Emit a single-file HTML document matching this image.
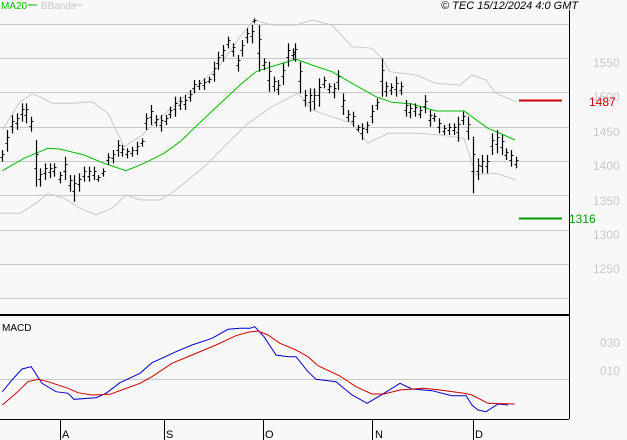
<!DOCTYPE html>
<html><head><meta charset="utf-8"><style>
html,body{margin:0;padding:0;background:#f8f8f8;width:627px;height:440px;overflow:hidden}
svg{display:block}
text{font-family:"Liberation Sans",sans-serif}
</style></head><body>
<svg id="s" width="627" height="440" viewBox="0 0 627 440" xmlns="http://www.w3.org/2000/svg">
<rect width="627" height="440" fill="#f8f8f8"/>
<g stroke="#c8c8c8" stroke-width="1">
<line x1="0" y1="24.5" x2="569" y2="24.5"/>
<line x1="0" y1="58.5" x2="569" y2="58.5"/>
<line x1="0" y1="92.5" x2="569" y2="92.5"/>
<line x1="0" y1="127.5" x2="569" y2="127.5"/>
<line x1="0" y1="161.5" x2="569" y2="161.5"/>
<line x1="0" y1="195.5" x2="569" y2="195.5"/>
<line x1="0" y1="230.5" x2="569" y2="230.5"/>
<line x1="0" y1="264.5" x2="569" y2="264.5"/>
<line x1="0" y1="298.5" x2="569" y2="298.5"/>
<line x1="0" y1="379.5" x2="569" y2="379.5"/>
</g>
<line x1="569.5" y1="10" x2="569.5" y2="419" stroke="#000"/>
<line x1="0" y1="315" x2="569" y2="315" stroke="#000" stroke-width="2"/>
<line x1="0" y1="419.5" x2="569" y2="419.5" stroke="#000"/>
<g stroke="#000"><line x1="60.5" y1="419" x2="60.5" y2="440"/><line x1="164.5" y1="419" x2="164.5" y2="440"/><line x1="263.5" y1="419" x2="263.5" y2="440"/><line x1="372.5" y1="419" x2="372.5" y2="440"/><line x1="473.5" y1="419" x2="473.5" y2="440"/></g>
<g font-size="11" fill="#000"><text x="62" y="438">A</text><text x="166" y="438">S</text><text x="265" y="438">O</text><text x="375" y="438">N</text><text x="475" y="438">D</text></g>
<g font-size="12" fill="#c8c8c8"><text x="593" y="67">1550</text><text x="593" y="101">1500</text><text x="593" y="136">1450</text><text x="593" y="170">1400</text><text x="593" y="205">1350</text><text x="593" y="239">1300</text><text x="593" y="273">1250</text><text x="600" y="347">030</text><text x="600" y="375">010</text></g>
<line x1="519" y1="100.5" x2="562" y2="100.5" stroke="#cc0000" stroke-width="2"/>
<text x="589" y="106" font-size="12" fill="#cc0000">1487</text>
<line x1="519" y1="218.5" x2="562" y2="218.5" stroke="#009900" stroke-width="2"/>
<text x="569" y="223" font-size="12" fill="#009900">1316</text>
<text x="1" y="9" font-size="10" fill="#00bb00">MA20</text><line x1="28" y1="5" x2="37" y2="5" stroke="#00bb00"/>
<text x="41" y="9" font-size="10" fill="#c8c8c8">BBands</text><line x1="74" y1="5" x2="83" y2="5" stroke="#c8c8c8"/>
<text x="441" y="9" font-size="11" font-style="italic" fill="#000">© TEC 15/12/2024 4:0 GMT</text>
<text x="2" y="331" font-size="10" fill="#000">MACD</text>
<g id="g"></g>
</svg>
<script>
var g=document.getElementById('g'),ns="http://www.w3.org/2000/svg";
function pl(pts,c,dy){var p=document.createElementNS(ns,'polyline');var s=[];for(var i=0;i<pts.length;i+=2)s.push((pts[i]/2.5).toFixed(1)+','+(dy+pts[i+1]/3).toFixed(1));p.setAttribute('points',s.join(' '));p.setAttribute('fill','none');p.setAttribute('stroke',c);p.setAttribute('stroke-width','1');g.appendChild(p);}
pl([6,390,50,305,80,282,100,290,130,310,180,310,230,305,270,340,310,440,350,410,400,355,450,300,500,250,550,195,600,110,635,60,680,75,740,75,780,60,830,75,880,140,930,145,955,175,975,215,1040,225,1090,250,1150,255,1180,225,1215,240,1240,280,1290,305],'#c8c8c8',0);
pl([0,640,50,640,90,610,120,580,160,595,200,625,240,645,280,625,315,585,350,600,400,600,440,570,520,490,560,440,620,370,680,320,745,280,780,330,830,350,880,370,920,430,970,400,1040,400,1100,405,1160,415,1190,525,1240,520,1290,540],'#c8c8c8',0);
pl([6,512,60,475,120,445,150,447,210,465,260,490,315,512,360,490,410,460,450,425,520,345,560,300,600,255,640,215,700,192,740,178,780,195,830,215,880,250,940,290,980,307,1030,312,1090,333,1160,333,1220,385,1260,405,1287,420],'#00bb00',0);
pl([6,515,30,480,55,447,78,440,105,490,140,515,170,520,185,538,240,533,265,520,300,488,350,460,380,428,410,412,440,395,480,375,530,355,570,328,600,325,625,325,637,320,660,350,690,405,720,410,740,410,770,455,790,478,840,485,880,525,918,550,960,520,1000,490,1030,507,1080,512,1130,527,1165,527,1180,555,1195,570,1215,575,1245,552,1270,555],'#0000cc',220);
pl([6,555,40,520,70,485,95,478,120,485,170,505,195,518,230,525,275,523,350,490,380,470,430,430,480,405,540,375,590,347,620,337,645,333,670,345,700,370,740,390,770,410,795,437,850,468,890,500,930,522,960,522,1000,510,1060,505,1100,510,1160,520,1180,525,1220,550,1287,552],'#cc0000',220);
var b=[6,450,485,18,390,455,30,345,400,42,340,390,54,310,365,66,310,370,78,350,395,90,420,560,100,505,560,112,490,540,124,490,535,136,490,530,150,515,550,162,470,540,174,525,575,186,525,605,198,520,575,210,500,545,222,500,545,234,500,540,246,525,545,258,505,530,270,460,495,282,450,490,294,420,470,306,435,470,318,445,475,330,440,470,342,425,465,354,415,440,366,340,390,378,315,375,390,345,380,402,345,395,414,345,375,426,320,355,438,290,350,450,290,330,462,285,330,474,270,305,486,240,280,498,240,270,510,235,270,522,230,250,534,185,245,546,155,210,558,135,185,570,110,145,582,130,170,594,165,215,606,120,170,618,85,130,630,75,130,636,55,70,648,75,215,660,175,210,672,185,275,684,230,275,696,240,285,708,190,255,720,130,200,732,145,180,738,130,185,750,185,280,762,270,320,774,265,335,786,265,330,798,235,320,810,230,265,822,250,280,834,250,295,846,210,270,858,280,345,870,330,365,882,335,380,894,375,395,906,370,420,918,365,400,930,315,370,942,295,330,954,175,290,966,245,290,978,250,285,990,230,290,1002,245,285,1014,300,350,1026,310,355,1038,310,350,1050,320,355,1062,285,340,1074,330,380,1086,340,365,1098,355,400,1110,375,405,1122,370,405,1134,370,405,1146,350,425,1158,335,375,1170,350,420,1182,410,580,1194,475,540,1206,465,520,1218,465,520,1230,400,465,1242,390,460,1254,405,465,1266,445,480,1278,450,500,1290,470,505];
var h='';for(var i=0;i<b.length;i+=3){var x=Math.round(b[i]/2.5)+0.5,t=b[i+1]/3,u=b[i+2]/3,o=Math.round(t+(u-t)*0.6)+0.5,c=Math.round(t+(u-t)*0.3)+0.5;
h+='<line x1="'+x+'" y1="'+t+'" x2="'+x+'" y2="'+u+'" stroke="#000" stroke-width="1.2"/><line x1="'+(x-2)+'" y1="'+o+'" x2="'+x+'" y2="'+o+'" stroke="#000"/><line x1="'+x+'" y1="'+c+'" x2="'+(x+2)+'" y2="'+c+'" stroke="#000"/>';}
g.insertAdjacentHTML('beforeend',h);
</script>
</body></html>
